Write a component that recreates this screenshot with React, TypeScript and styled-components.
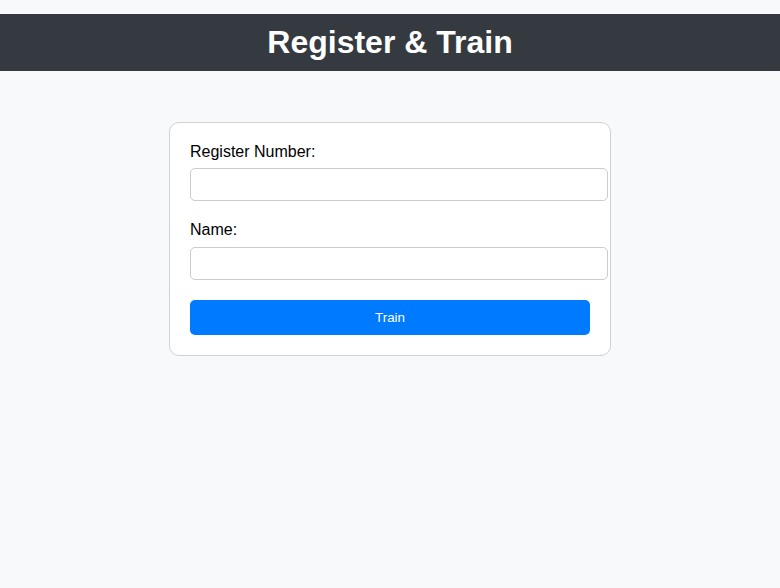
import React from "react";
import styled, { createGlobalStyle } from "styled-components";

const GlobalStyle = createGlobalStyle`
  html, body {
    margin: 0;
    padding: 0;
    background: #f8f9fa;
    font-family: "Liberation Sans", Arial, sans-serif;
  }
`;

const Page = styled.div`
  padding-top: 14px;
  min-height: 574px;
  background: #f8f9fa;
`;

const Header = styled.h1`
  margin: 0;
  padding: 10px 0;
  background: #343a40;
  color: #ffffff;
  text-align: center;
  font-size: 32px;
  line-height: 37px;
  font-weight: bold;
`;

const Card = styled.form`
  width: 400px;
  margin: 51px auto 0;
  padding: 20px;
  background: #ffffff;
  border: 1px solid #cfd2d5;
  border-radius: 10px;
`;

const Label = styled.label`
  display: block;
  font-size: 16px;
  line-height: 18.4px;
  color: #000;
  margin-bottom: 7px;
`;

const Input = styled.input`
  display: block;
  box-sizing: border-box;
  width: 418px;
  height: 33px;
  margin: 0 0 20px;
  padding: 8px;
  border: 1px solid #cccccc;
  border-radius: 5px;
  background: #fff;
  font-family: inherit;
  font-size: 14px;
  outline: none;
`;

const Button = styled.button`
  display: block;
  width: 400px;
  height: 35px;
  border: none;
  border-radius: 5px;
  background: #007bff;
  color: #ffffff;
  font-family: "Liberation Sans", Arial, sans-serif;
  font-size: 13.33px;
  cursor: pointer;
`;

export default function App() {
  return (
    <>
      <GlobalStyle />
      <Page>
        <Header>Register &amp; Train</Header>
        <Card onSubmit={(e) => e.preventDefault()}>
          <Label htmlFor="reg">Register Number:</Label>
          <Input id="reg" type="text" />
          <Label htmlFor="name">Name:</Label>
          <Input id="name" type="text" />
          <Button type="submit">Train</Button>
        </Card>
      </Page>
    </>
  );
}
